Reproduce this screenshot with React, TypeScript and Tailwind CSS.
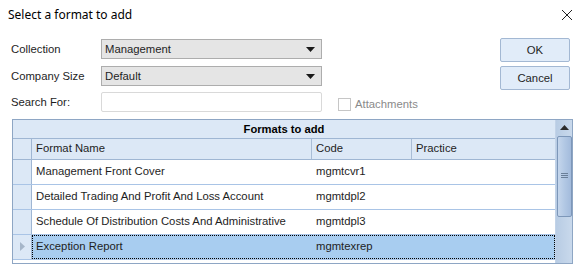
import React from "react";

const rows = [
  { name: "Management Front Cover", code: "mgmtcvr1" },
  { name: "Detailed Trading And Profit And Loss Account", code: "mgmtdpl2" },
  { name: "Schedule Of Distribution Costs And Administrative", code: "mgmtdpl3" },
  { name: "Exception Report", code: "mgmtexrep", selected: true },
];

function Caret() {
  return (
    <svg width="9" height="5" viewBox="0 0 9 5">
      <path d="M0 0h9L4.5 5z" fill="#1a1a1a" />
    </svg>
  );
}

export default function App() {
  return (
    <div
      className="w-[579px] h-[264px] bg-white overflow-hidden text-[#1e1e1e] flex flex-col text-[11.3px]"
      style={{ fontFamily: '"Liberation Sans", Arial, sans-serif' }}
    >
      {/* title bar */}
      <div className="h-[29px] shrink-0 flex items-center justify-between pl-[8px] pr-[6px]">
        <span className="text-[12px] text-black" style={{ fontFamily: '"Noto Sans", sans-serif' }}>
          Select a format to add
        </span>
        <svg width="12" height="12" viewBox="0 0 12 12">
          <path d="M1 1L11 11M11 1L1 11" stroke="#222" strokeWidth="1" />
        </svg>
      </div>

      {/* form */}
      <div className="flex shrink-0 pl-[11px] pr-[9px] mt-[10px]">
        <div className="flex flex-col w-[311px]">
          <div className="flex items-center h-[20px]">
            <span className="w-[90px]">Collection</span>
            <div className="flex-1 h-[20px] bg-[#e5e5e5] border border-[#adadad] flex items-center justify-between pl-[3px] pr-[6px]">
              <span>Management</span>
              <Caret />
            </div>
          </div>
          <div className="flex items-center h-[20px] mt-[7px]">
            <span className="w-[90px]">Company Size</span>
            <div className="flex-1 h-[20px] bg-[#e5e5e5] border border-[#adadad] flex items-center justify-between pl-[3px] pr-[6px]">
              <span>Default</span>
              <Caret />
            </div>
          </div>
          <div className="flex items-center h-[20px] mt-[6px]">
            <span className="w-[90px]">Search For:</span>
            <div className="flex-1 h-[20px] bg-white border border-[#d9d9d9] rounded-[2px]" />
          </div>
        </div>
        <div className="flex flex-col flex-1">
          <div className="h-[52px]" />
          <div className="flex items-center ml-[16px] mt-[5px]">
            <div className="w-[13px] h-[13px] border border-[#c6c6c6] bg-white" />
            <span className="ml-[4px] text-[#8a8a8a]">Attachments</span>
          </div>
        </div>
        <div className="flex flex-col w-[70px] -mt-[1px]">
          <div className="h-[24px] bg-[#e1ecf9] border border-[#a3b8d3] rounded-[2px] flex items-center justify-center">
            OK
          </div>
          <div className="h-[24px] mt-[4px] bg-[#e1ecf9] border border-[#a3b8d3] rounded-[2px] flex items-center justify-center">
            Cancel
          </div>
        </div>
      </div>

      {/* grid */}
      <div className="ml-[12px] mr-[6px] mt-[6px] border border-[#8ea6c4] flex flex-1 min-h-0 bg-white">
        <div className="flex-1 flex flex-col">
          <div className="h-[19px] shrink-0 bg-[#dce8f6] border-b border-[#9fb6d3] flex items-center justify-center text-[11.2px] font-bold text-black">
            Formats to add
          </div>
          <div className="h-[21px] shrink-0 bg-[#dce8f6] border-b border-[#9fb6d3] flex">
            <div className="w-[19px] border-r border-[#9fb6d3]" />
            <div className="w-[280px] flex items-center pl-[4px] border-r border-[#a9bdd6]">Format Name</div>
            <div className="w-[100px] flex items-center pl-[4px] border-r border-[#a9bdd6]">Code</div>
            <div className="flex-1 flex items-center pl-[4px]">Practice</div>
          </div>
          {rows.map((r) => (
            <div key={r.code} className="h-[25px] shrink-0 flex border-b border-[#a9c4e6]">
              <div className="w-[19px] bg-[#dce8f6] border-r border-[#9fb6d3] flex items-center justify-center">
                {r.selected && (
                  <svg width="5" height="9" viewBox="0 0 5 9">
                    <path d="M0 0L5 4.5L0 9z" fill="#a6b6c9" />
                  </svg>
                )}
              </div>
              {r.selected ? (
                <div className="flex-1 flex bg-[#a8cdf0] border border-dotted border-black">
                  <div className="w-[280px] flex items-center pl-[3px]">{r.name}</div>
                  <div className="w-[100px] flex items-center pl-[3px]">{r.code}</div>
                  <div className="flex-1" />
                </div>
              ) : (
                <div className="flex-1 flex">
                  <div className="w-[280px] flex items-center pl-[4px]">{r.name}</div>
                  <div className="w-[100px] flex items-center pl-[4px]">{r.code}</div>
                  <div className="flex-1" />
                </div>
              )}
            </div>
          ))}
        </div>
        {/* scrollbar */}
        <div className="w-[17px] bg-gradient-to-r from-[#b8cce4] to-[#c9d9ec] flex flex-col items-center border-l border-[#c2d3e8]">
          <div className="h-[16px] shrink-0 flex items-center justify-center">
            <svg width="9" height="5" viewBox="0 0 9 5">
              <path d="M4.5 0L9 5H0z" fill="#2b2b2b" />
            </svg>
          </div>
          <div className="w-[15px] h-[81px] shrink-0 rounded-[2px] border border-[#7d97b9] bg-gradient-to-r from-[#c5d6ec] via-[#b2c8e4] to-[#a3bbdc] flex items-center justify-center">
            <svg width="7" height="6" viewBox="0 0 7 6">
              <path d="M0 0.5h7M0 2.5h7M0 4.5h7" stroke="#6a7f99" strokeWidth="1" />
            </svg>
          </div>
        </div>
      </div>
    </div>
  );
}
